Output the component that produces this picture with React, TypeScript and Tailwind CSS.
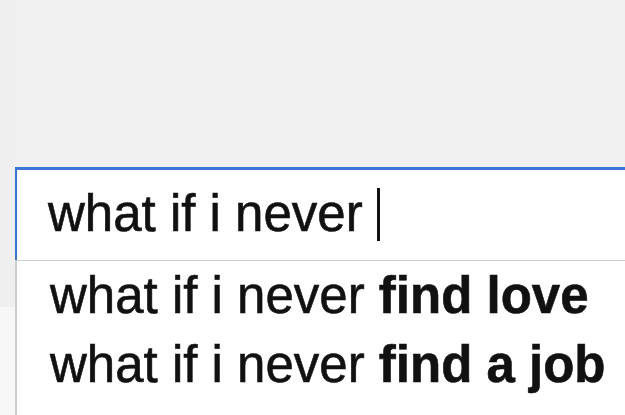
const suggestions = ["find love", "find a job"]

export default function App() {
  const query = "what if i never"

  return (
    <div className="flex h-[415px] w-[625px] overflow-hidden bg-[#f0f0f0] font-['Liberation_Sans',Arial,sans-serif] text-[#111]">
      <div className="flex w-[15px] flex-col">
        <div className="h-[307px] bg-[#efefef]" />
        <div className="flex-1 bg-[#f7f7f7]" />
      </div>
      <div className="flex flex-1 flex-col pt-[167px]">
        <div className="h-[93px] border-t-[3px] border-l-2 border-[#3b73d6] bg-white pl-[31px] pt-[15px]">
          <div className="whitespace-pre text-[51px] leading-[58px] [-webkit-text-stroke:0.6px_#111]">
            {query + " "}
            <span className="inline-block h-[53px] w-[3px] bg-[#111] align-[-10px]" />
          </div>
        </div>
        <div className="flex-1 border-t border-l-2 border-[#cdcdcd] bg-white pl-[33px]">
          {suggestions.map((s) => (
            <div key={s} className="whitespace-pre text-[51px] leading-[69px] [-webkit-text-stroke:0.6px_#111]">
              {query} <span className="font-bold">{s}</span>
            </div>
          ))}
        </div>
      </div>
    </div>
  )
}
